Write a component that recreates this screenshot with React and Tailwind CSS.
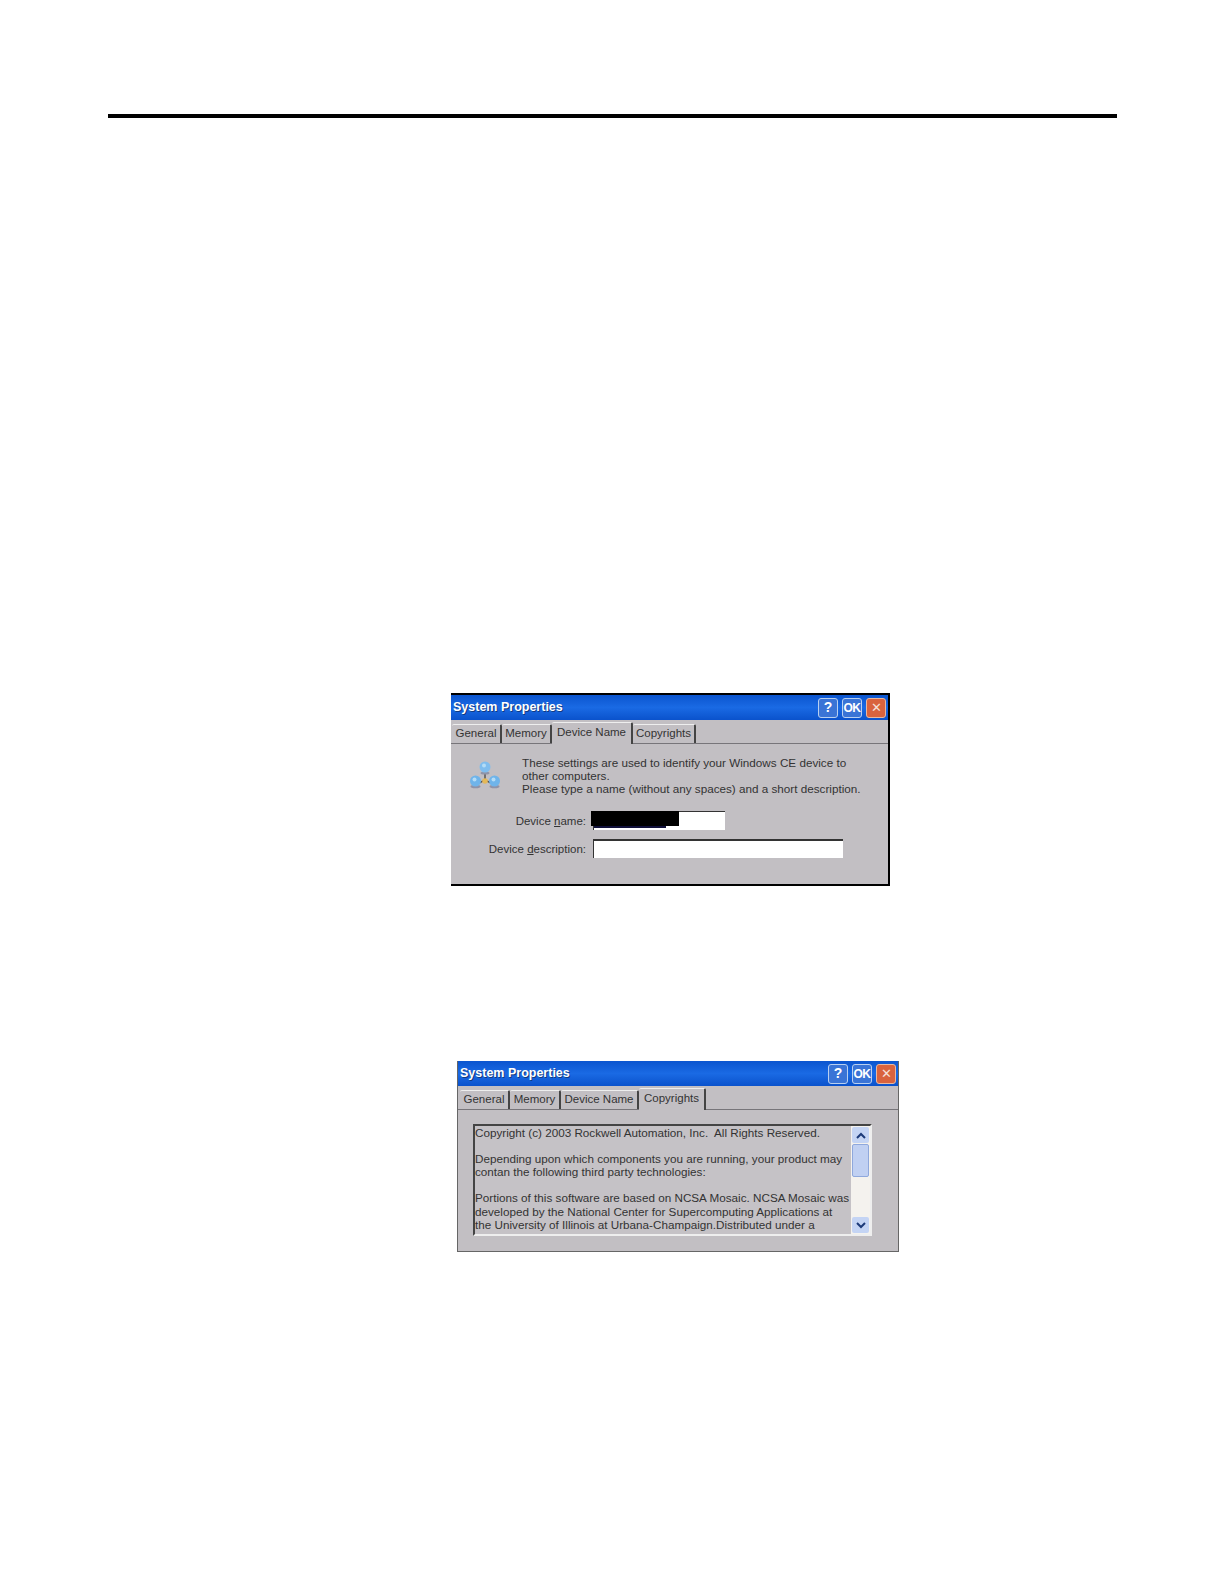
import React from "react";

function TitleBar() {
  return (
    <div className="flex h-[25px] items-center justify-between bg-gradient-to-b from-[#0b55cf] via-[#1a6ae4] to-[#0a52cc] pl-[2px] pr-[2px]">
      <span className="text-[12.5px] font-bold text-white [text-shadow:1px_1px_0_#123a80]">
        System Properties
      </span>
      <div className="flex gap-[4px]">
        <button className="flex h-[20px] w-[20px] items-center justify-center rounded-[3px] border border-[#b9d0f0] bg-[#3a74d6] text-[14px] font-bold text-white">?</button>
        <button className="flex h-[20px] w-[20px] items-center justify-center rounded-[3px] border border-[#b9d0f0] bg-[#3a74d6] text-[12px] font-bold tracking-[-0.5px] text-white">OK</button>
        <button className="flex h-[20px] w-[20px] items-center justify-center rounded-[3px] border border-[#e8b8a0] bg-[#d9633e] text-[13px] text-[#f6e0d8]">✕</button>
      </div>
    </div>
  );
}

function Tabs({ items, active, pad }) {
  return (
    <div className={`flex h-[24px] items-end border-b border-[#77757a] ${pad}`}>
      {items.map((tab) => (
        <div
          key={tab.name}
          style={{ width: tab.w }}
          className={
            tab.name === active
              ? "relative top-[1px] flex h-[22px] items-start justify-center rounded-t-[2px] border-t border-r-2 border-t-[#eeeeee] border-r-[#444] bg-[#c2bfc3] text-[11.5px] leading-[18px] text-[#333]"
              : "flex h-[19px] items-center justify-center rounded-t-[2px] border-t border-r-2 border-t-[#eeeeee] border-r-[#444] bg-[#c2bfc3] text-[11.5px] text-[#333]"
          }
        >
          {tab.name}
        </div>
      ))}
    </div>
  );
}

function NetworkIcon() {
  return (
    <svg width="30" height="28" viewBox="0 0 30 28" className="ml-[2px] mt-[5px] shrink-0">
      <path d="M15 12 L15 19 M7 23 L15 19 L23 23" stroke="#555" strokeWidth="1.5" fill="none" />
      <ellipse cx="15" cy="12" rx="4.5" ry="1.6" fill="#8f93a8" />
      <circle cx="15" cy="6" r="5.5" fill="#7fbdee" />
      <circle cx="14" cy="4.5" r="2" fill="#b4dcf6" />
      <ellipse cx="5.5" cy="25.5" rx="5" ry="1.8" fill="#8f93a8" />
      <circle cx="5.5" cy="20" r="5.5" fill="#6fb4ea" />
      <circle cx="4.5" cy="18.5" r="2" fill="#b4dcf6" />
      <ellipse cx="24.5" cy="25.5" rx="5" ry="1.8" fill="#8f93a8" />
      <circle cx="24.5" cy="20" r="5.5" fill="#6fb4ea" />
      <circle cx="23.5" cy="18.5" r="2" fill="#b4dcf6" />
      <circle cx="15" cy="20" r="2.8" fill="#e4b858" />
    </svg>
  );
}

export default function App() {
  return (
    <div className="min-h-[1584px] w-[1224px] bg-white pt-[114px] font-['Liberation_Sans',sans-serif]">
      <div className="ml-[108px] h-[4px] w-[1009px] bg-black" />

      {/* first dialog */}
      <div className="ml-[451px] mt-[575px] h-[193px] w-[439px] border-t-2 border-r-2 border-b-2 border-black bg-[#c2bfc3]">
        <TitleBar />
        <Tabs
          active="Device Name"
          pad="pl-[1px]"
          items={[
            { name: "General", w: 50 },
            { name: "Memory", w: 50 },
            { name: "Device Name", w: 81 },
            { name: "Copyrights", w: 63 },
          ]}
        />
        <div className="flex pl-[17px] pt-[12px]">
          <NetworkIcon />
          <p className="ml-[22px] text-[11.7px] leading-[13px] text-[#333]">
            These settings are used to identify your Windows CE device to
            <br />
            other computers.
            <br />
            Please type a name (without any spaces) and a short description.
          </p>
        </div>
        <div className="mt-[16px] flex items-center">
          <span className="w-[135px] pt-[2px] text-right text-[11.5px] text-[#333]">
            Device <u>n</u>ame:
          </span>
          <div className="relative ml-[7px] h-[19px] w-[132px] border-t border-l border-[#333] bg-white">
            <div className="absolute -left-[3px] -top-[1px] h-[15px] w-[88px] bg-black" />
            <div className="absolute left-[0px] top-[14px] h-[2px] w-[72px] bg-[#10103a]" />
          </div>
        </div>
        <div className="mt-[9px] flex items-center">
          <span className="w-[135px] pt-[2px] text-right text-[11.5px] text-[#333]">
            Device <u>d</u>escription:
          </span>
          <div className="ml-[7px] h-[19px] w-[250px] border-t-2 border-l border-[#333] bg-white" />
        </div>
      </div>

      {/* second dialog */}
      <div className="ml-[457px] mt-[175px] h-[191px] w-[442px] border-r border-b border-l border-[#666] bg-[#c2bfc3]">
        <TitleBar />
        <Tabs
          active="Copyrights"
          pad="pl-[2px]"
          items={[
            { name: "General", w: 50 },
            { name: "Memory", w: 51 },
            { name: "Device Name", w: 78 },
            { name: "Copyrights", w: 67 },
          ]}
        />
        <div className="ml-[15px] mt-[14px] flex h-[112px] w-[399px] border-t-2 border-r-2 border-b-2 border-l-2 border-t-[#444] border-r-[#eeeeee] border-b-[#eeeeee] border-l-[#444] bg-[#c5c2c6]">
          <p className="h-full flex-1 overflow-hidden whitespace-pre text-[11.7px] leading-[13.1px] text-[#333]">
            {"Copyright (c) 2003 Rockwell Automation, Inc.  All Rights Reserved.\n\nDepending upon which components you are running, your product may\ncontan the following third party technologies:\n\nPortions of this software are based on NCSA Mosaic. NCSA Mosaic was\ndeveloped by the National Center for Supercomputing Applications at\nthe University of Illinois at Urbana-Champaign.Distributed under a"}
          </p>
          <div className="flex w-[19px] flex-col bg-[#f4f2ee] p-[1px]">
            <div className="flex h-[16px] items-center justify-center rounded-[2px] bg-[#c4d4f4]">
              <svg width="10" height="7" viewBox="0 0 10 7"><path d="M1 6 L5 2 L9 6" stroke="#1c3a78" strokeWidth="2" fill="none" /></svg>
            </div>
            <div className="mt-[1px] h-[33px] rounded-[2px] border border-[#8fa8dc] bg-[#c0d0f2]" />
            <div className="flex-1" />
            <div className="flex h-[16px] items-center justify-center rounded-[2px] bg-[#c4d4f4]">
              <svg width="10" height="7" viewBox="0 0 10 7"><path d="M1 1 L5 5 L9 1" stroke="#1c3a78" strokeWidth="2" fill="none" /></svg>
            </div>
          </div>
        </div>
      </div>
    </div>
  );
}
